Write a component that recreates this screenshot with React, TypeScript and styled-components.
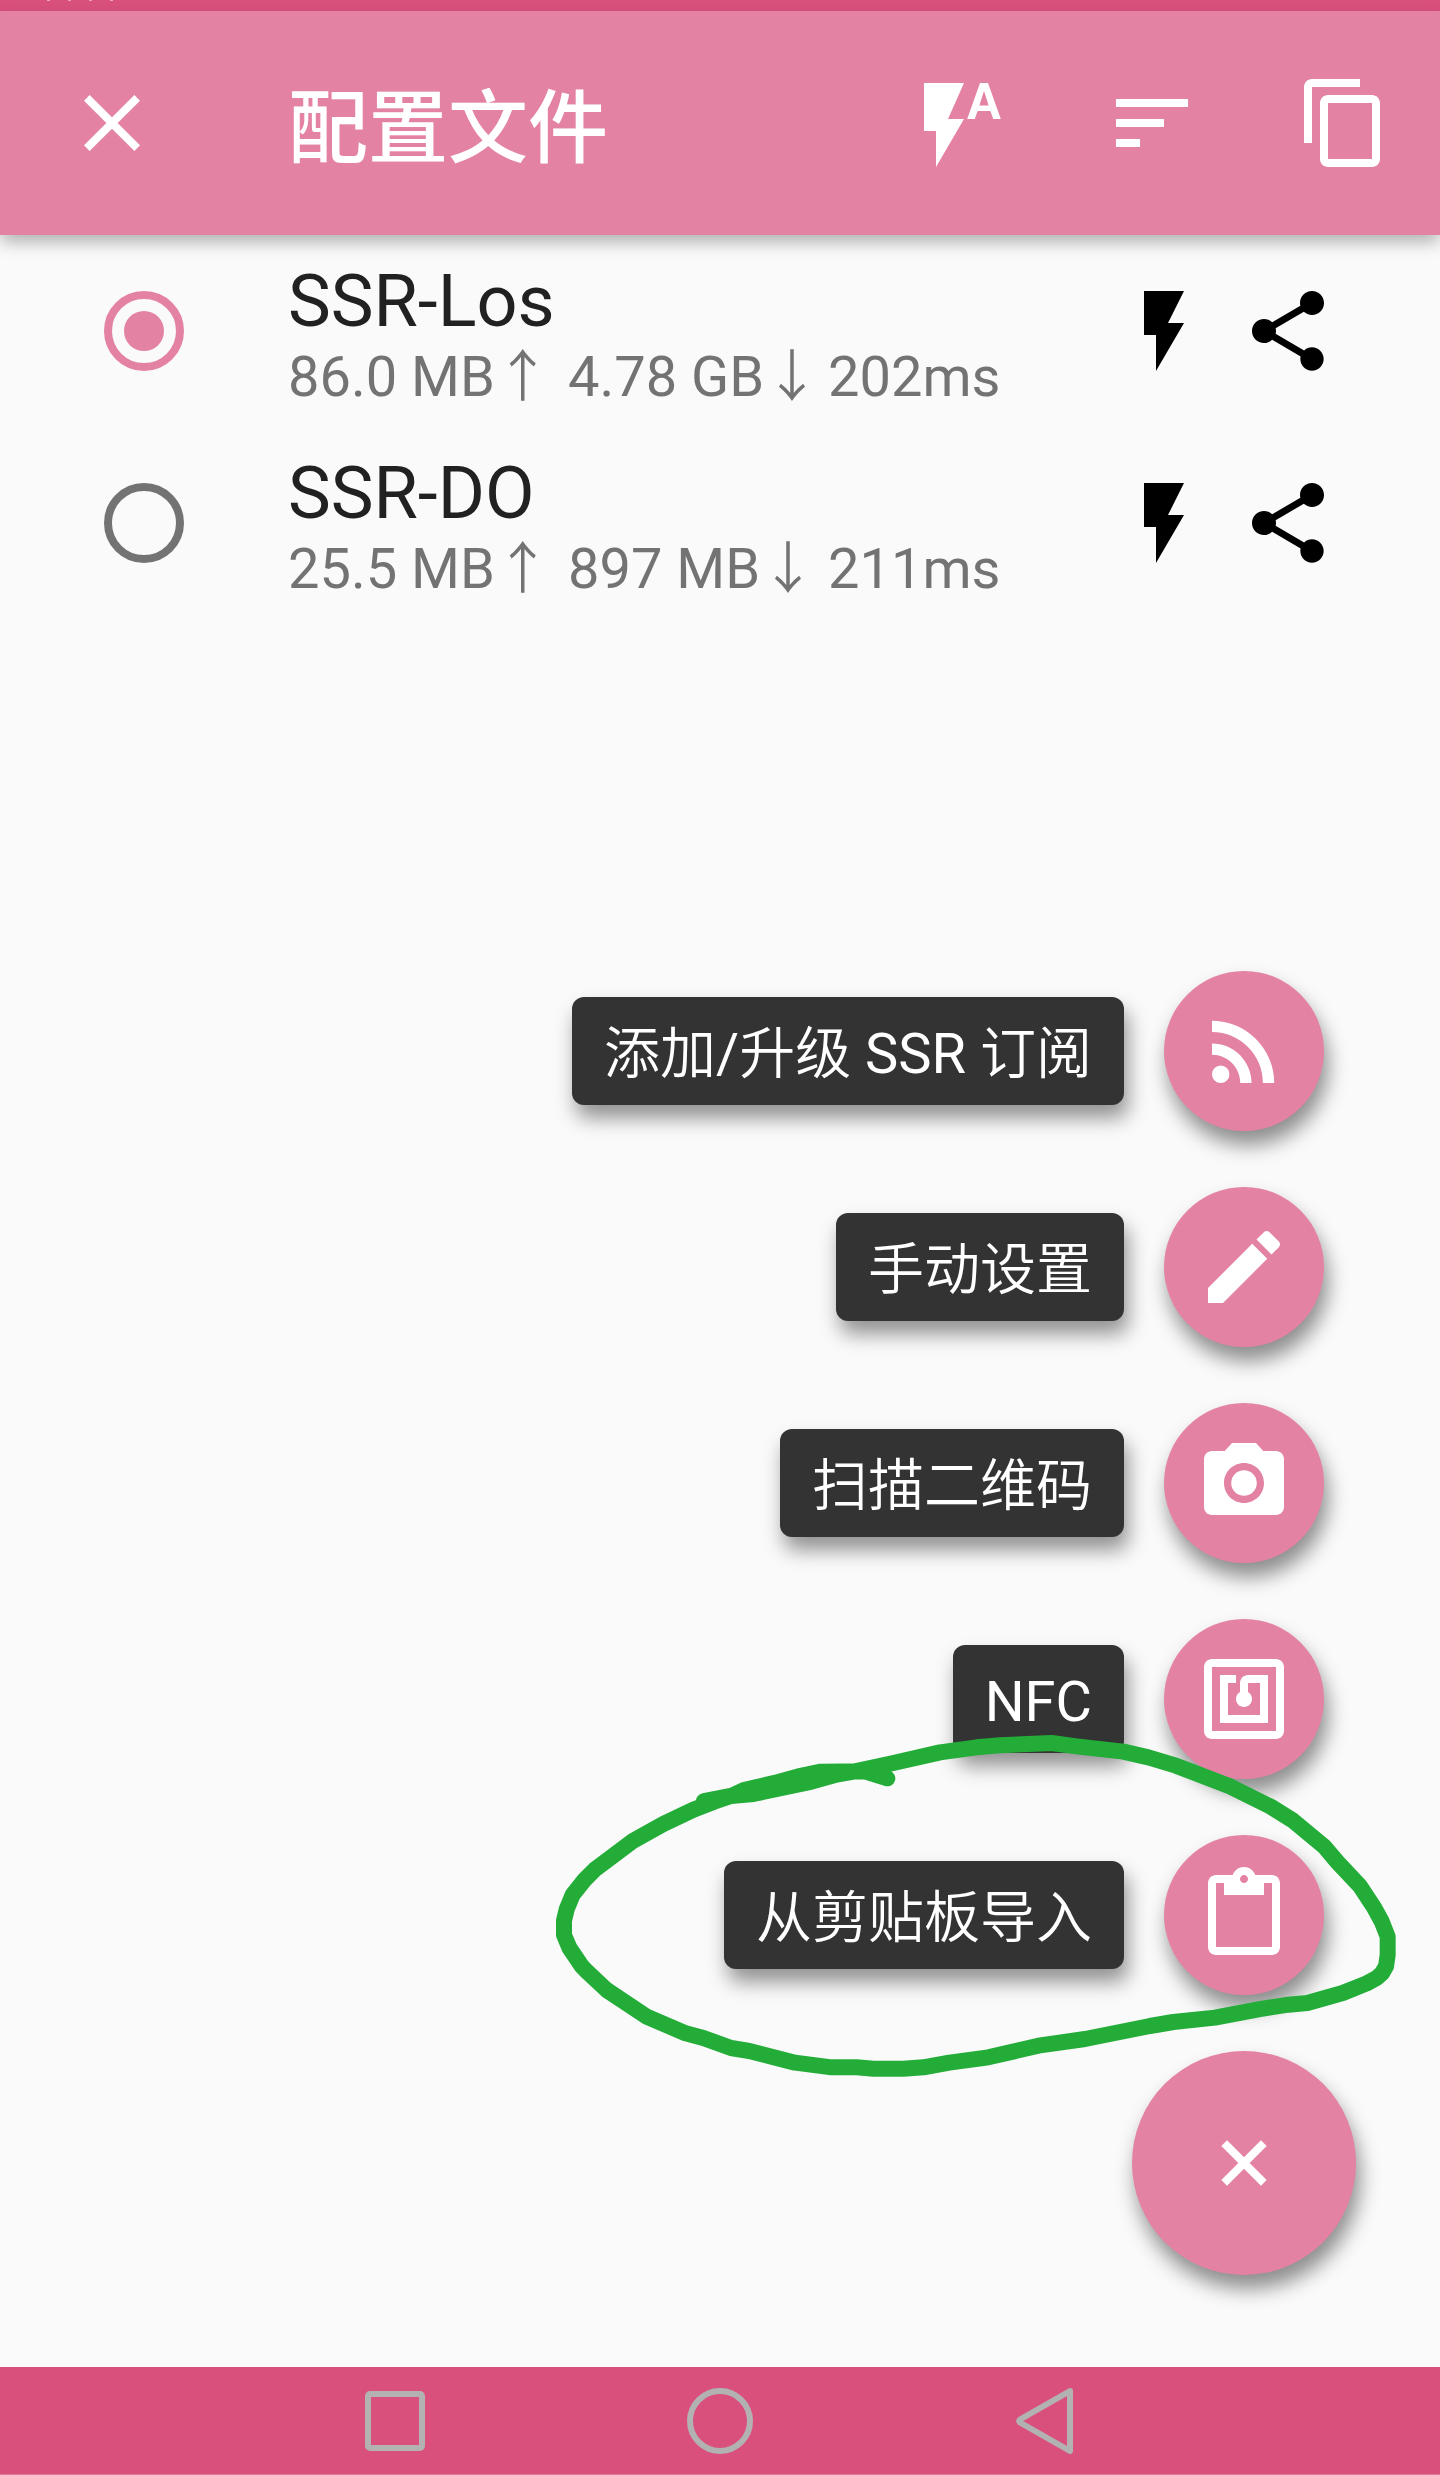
import React from 'react';
import styled, { createGlobalStyle } from 'styled-components';

const pink = '#e482a3';
const deepPink = '#da507d';

const GlobalStyle = createGlobalStyle`
  * { box-sizing: border-box; }
  body {
    margin: 0;
    background: #fafafa;
    font-family: Roboto, "Noto Sans CJK SC DemiLight", "Noto Sans CJK SC", sans-serif;
  }
`;

const Screen = styled.div`
  position: relative;
  display: flex;
  flex-direction: column;
  width: 1440px;
  height: 2475px;
  overflow: hidden;
  background: #fafafa;
`;

const StatusBar = styled.div`
  flex: none;
  display: flex;
  gap: 18px;
  height: 11px;
  padding-left: 47px;
  background: ${deepPink};
`;

const StatusMark = styled.span`
  width: 3px;
  height: 1px;
  background: #e9a3bb;
`;

const AppBar = styled.header`
  flex: none;
  z-index: 1;
  display: flex;
  align-items: center;
  height: 224px;
  padding: 0 48px 0 64px;
  background: ${pink};
  color: #fff;
  box-shadow: 0 8px 16px -1px rgba(0, 0, 0, 0.3);
`;

const Title = styled.h1`
  flex: 1;
  margin: 11px 0 0 128px;
  font-family: Roboto, "Noto Sans CJK SC", sans-serif;
  font-size: 80px;
  line-height: 96px;
  font-weight: 500;
`;

const Actions = styled.div`
  display: flex;
  gap: 96px;
`;

const Icon = styled.svg`
  flex: none;
  display: block;
  width: 96px;
  height: 96px;
  fill: currentColor;
`;

const TurnedIcon = styled(Icon)`
  transform: rotate(45deg);
`;

const Main = styled.main`
  flex: 1;
  display: flex;
  flex-direction: column;
  justify-content: space-between;
  padding-bottom: 92px;
`;

const ProfileRow = styled.div`
  display: flex;
  align-items: center;
  height: 192px;
  padding: 0 104px;
`;

const Radio = styled.span<{ $on: boolean }>`
  flex: none;
  display: flex;
  align-items: center;
  justify-content: center;
  width: 80px;
  height: 80px;
  border: 8px solid ${p => (p.$on ? pink : '#737373')};
  border-radius: 50%;

  &::after {
    content: '';
    width: 40px;
    height: 40px;
    border-radius: 50%;
    background: ${p => (p.$on ? pink : 'transparent')};
  }
`;

const ProfileText = styled.div`
  flex: 1;
  margin-left: 104px;
  padding-top: 8px;
  white-space: nowrap;
`;

const ProfileName = styled.div`
  font-size: 72px;
  line-height: 84px;
  color: #212121;
`;

const ProfileStats = styled.div`
  display: grid;
  grid-template-columns: 280px 260px auto;
  font-size: 56px;
  line-height: 66px;
  color: #737373;
`;

const RowActions = styled.div`
  display: flex;
  gap: 28px;
  color: #000;
`;

const FabMenu = styled.div`
  display: flex;
  flex-direction: column;
  align-items: flex-end;
  gap: 56px;
  padding-right: 84px;
`;

const FabItem = styled.div`
  display: flex;
  align-items: center;
  gap: 40px;
  margin-right: 32px;
`;

const FabLabel = styled.span`
  height: 108px;
  padding: 0 32px;
  border-radius: 12px;
  background: #333;
  color: #fff;
  font-size: 56px;
  line-height: 114px;
  white-space: nowrap;
  box-shadow: 4px 13px 20px rgba(0, 0, 0, 0.42);
`;

const Fab = styled.button<{ $size: number }>`
  display: flex;
  align-items: center;
  justify-content: center;
  width: ${p => p.$size}px;
  height: ${p => p.$size}px;
  padding: 0;
  border: 0;
  border-radius: 50%;
  background: ${pink};
  color: #fff;
  box-shadow: 4px 14px 20px rgba(0, 0, 0, 0.44);
`;

const NavBar = styled.nav`
  flex: none;
  display: flex;
  justify-content: center;
  gap: 229px;
  height: 108px;
  padding-top: 6px;
  border-bottom: 1px solid #e47a9c;
  background: ${deepPink};
`;

const NavIcon = styled.svg`
  width: 96px;
  height: 96px;
  fill: none;
  stroke: #b2b2b2;
  stroke-width: 6;
  stroke-linejoin: round;
`;

const Scribble = styled.svg`
  position: absolute;
  left: 540px;
  top: 1720px;
  width: 880px;
  height: 380px;
  fill: none;
  stroke: #23ad38;
  stroke-width: 48;
  stroke-linecap: round;
  stroke-linejoin: round;
  pointer-events: none;
`;

const paths = {
  close: 'M19 6.41L17.59 5 12 10.59 6.41 5 5 6.41 10.59 12 5 17.59 6.41 19 12 13.41 17.59 19 19 17.59 13.41 12z',
  flashAuto: 'M3 2v12h3v9l7-12H9l4-9H3zm16 0h-2l-3.2 9h1.9l.7-2h3.2l.7 2h1.9L19 2zm-2.15 5.65L18 4l1.15 3.65h-2.3z',
  sort: 'M3 18h6v-2H3v2zM3 6v2h18V6H3zm0 7h12v-2H3v2z',
  copy: 'M16 1H4c-1.1 0-2 .9-2 2v14h2V3h12V1zm3 4H8c-1.1 0-2 .9-2 2v14c0 1.1.9 2 2 2h11c1.1 0 2-.9 2-2V7c0-1.1-.9-2-2-2zm0 16H8V7h11v14z',
  flash: 'M7 2v11h3v9l7-12h-4l4-8z',
  share: 'M18 16.08c-.76 0-1.44.3-1.96.77L8.91 12.7c.05-.23.09-.46.09-.7s-.04-.47-.09-.7l7.05-4.11c.54.5 1.25.81 2.04.81 1.66 0 3-1.34 3-3s-1.34-3-3-3-3 1.34-3 3c0 .24.04.47.09.7L8.04 9.81C7.5 9.31 6.79 9 6 9c-1.66 0-3 1.34-3 3s1.34 3 3 3c.79 0 1.5-.31 2.04-.81l7.12 4.16c-.05.21-.08.43-.08.65 0 1.61 1.31 2.92 2.92 2.92 1.61 0 2.92-1.31 2.92-2.92s-1.31-2.92-2.92-2.92z',
  rss: 'M6.18 15.64a2.18 2.18 0 1 0 0 4.36 2.18 2.18 0 0 0 0-4.36zM4 4.44v2.83c7.03 0 12.73 5.7 12.73 12.73h2.83c0-8.59-6.97-15.56-15.56-15.56zm0 5.66v2.83c3.9 0 7.07 3.17 7.07 7.07h2.83c0-5.47-4.43-9.9-9.9-9.9z',
  edit: 'M3 17.25V21h3.75L17.81 9.94l-3.75-3.75L3 17.25zM20.71 7.04c.39-.39.39-1.02 0-1.41l-2.34-2.34c-.39-.39-1.02-.39-1.41 0l-1.83 1.83 3.75 3.75 1.83-1.83z',
  camera: 'M12 8.8a3.2 3.2 0 1 0 0 6.4 3.2 3.2 0 0 0 0-6.4zM9 2L7.17 4H4c-1.1 0-2 .9-2 2v12c0 1.1.9 2 2 2h16c1.1 0 2-.9 2-2V6c0-1.1-.9-2-2-2h-3.17L15 2H9zm3 15c-2.76 0-5-2.24-5-5s2.24-5 5-5 5 2.24 5 5-2.24 5-5 5z',
  nfc: 'M20 2H4c-1.1 0-2 .9-2 2v16c0 1.1.9 2 2 2h16c1.1 0 2-.9 2-2V4c0-1.1-.9-2-2-2zm0 18H4V4h16v16zM18 6h-5c-1.1 0-2 .9-2 2v2.28c-.6.35-1 .98-1 1.72 0 1.1.9 2 2 2s2-.9 2-2c0-.74-.4-1.38-1-1.72V8h3v8H8V8h2V6H6v12h12V6z',
  paste: 'M19 2h-4.18C14.4.84 13.3 0 12 0c-1.3 0-2.4.84-2.82 2H5c-1.1 0-2 .9-2 2v16c0 1.1.9 2 2 2h14c1.1 0 2-.9 2-2V4c0-1.1-.9-2-2-2zm-7 0c.55 0 1 .45 1 1s-.45 1-1 1-1-.45-1-1 .45-1 1-1zm7 18H5V4h2v3h10V4h2v16z',
  add: 'M19 13h-6v6h-2v-6H5v-2h6V5h2v6h6v2z',
};

type IconName = keyof typeof paths;

const Glyph = ({ name }: { name: IconName }) => (
  <Icon viewBox="0 0 24 24">
    <path d={paths[name]} />
  </Icon>
);

const profiles = [
  { name: 'SSR-Los', sent: '86.0 MB↑', received: '4.78 GB↓', ping: '202ms', selected: true },
  { name: 'SSR-DO', sent: '25.5 MB↑', received: '897 MB↓', ping: '211ms', selected: false },
];

const menu: { label: string; icon: IconName }[] = [
  { label: '添加/升级 SSR 订阅', icon: 'rss' },
  { label: '手动设置', icon: 'edit' },
  { label: '扫描二维码', icon: 'camera' },
  { label: 'NFC', icon: 'nfc' },
  { label: '从剪贴板导入', icon: 'paste' },
];

const loop =
  '492,243 565,229 640,222 815,185 890,164 945,154 1060,129 1200,97 1310,82 1380,76 1535,69 1610,79 1750,95 1825,112 1908,137 2065,197 2192,260 2258,301 2353,380 2392,426 2459,497 2502,562 2525,604 2543,650 2543,705 2538,739 2526,760 2510,774 2480,790 2408,819 2302,849 2245,854 2155,868 2025,893 1900,906 1830,918 1635,957 1495,977 1345,1012 1228,1028 1150,1042 1090,1046 1000,1046 950,1042 875,1042 765,1028 628,993 573,984 490,954 437,940 320,890 200,810 138,752 125,738 88,683 72,645 72,602 80,568 98,524 135,478 165,448 280,362 370,312 460,269 522,245 575,227 612,210 715,186 775,169 843,155 975,154 1042,175';

export default function App() {
  return (
    <>
      <GlobalStyle />
      <Screen>
        <StatusBar>
          <StatusMark />
          <StatusMark />
          <StatusMark />
          <StatusMark />
        </StatusBar>
        <AppBar>
          <Glyph name="close" />
          <Title>配置文件</Title>
          <Actions>
            <Glyph name="flashAuto" />
            <Glyph name="sort" />
            <Glyph name="copy" />
          </Actions>
        </AppBar>
        <Main>
          <div>
            {profiles.map(p => (
              <ProfileRow key={p.name}>
                <Radio $on={p.selected} />
                <ProfileText>
                  <ProfileName>{p.name}</ProfileName>
                  <ProfileStats>
                    <span>{p.sent}</span>
                    <span>{p.received}</span>
                    <span>{p.ping}</span>
                  </ProfileStats>
                </ProfileText>
                <RowActions>
                  <Glyph name="flash" />
                  <Glyph name="share" />
                </RowActions>
              </ProfileRow>
            ))}
          </div>
          <FabMenu>
            {menu.map(m => (
              <FabItem key={m.label}>
                <FabLabel>{m.label}</FabLabel>
                <Fab $size={160}>
                  <Glyph name={m.icon} />
                </Fab>
              </FabItem>
            ))}
            <Fab $size={224}>
              <TurnedIcon viewBox="0 0 24 24">
                <path d={paths.add} />
              </TurnedIcon>
            </Fab>
          </FabMenu>
        </Main>
        <NavBar>
          <NavIcon viewBox="0 0 96 96">
            <rect x="21" y="21" width="54" height="54" rx="2" />
          </NavIcon>
          <NavIcon viewBox="0 0 96 96">
            <circle cx="48" cy="48" r="30" />
          </NavIcon>
          <NavIcon viewBox="0 0 96 96">
            <path d="M73 18L23 46.5Q21.500 48 23 49.500L73 78Z" />
          </NavIcon>
        </NavBar>
        <Scribble viewBox="0 0 2640 1140">
          <polyline points={loop} />
        </Scribble>
      </Screen>
    </>
  );
}
